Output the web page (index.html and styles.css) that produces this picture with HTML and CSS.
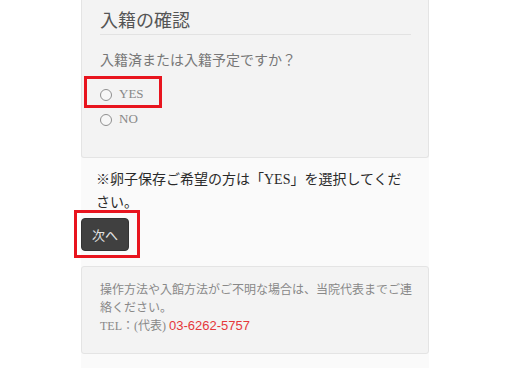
FILE: index.html
```html
<!DOCTYPE html>
<html lang="ja">
<head>
<meta charset="utf-8">
<title>入籍の確認</title>
<link rel="stylesheet" href="styles.css">
</head>
<body>
<div class="page">
  <section class="card card-top">
    <h2 class="card-title">入籍の確認</h2>
    <p class="question">入籍済または入籍予定ですか？</p>
    <label class="option option-marked"><input type="radio" name="married" class="radio"><span class="option-text">YES</span><span class="mark mark-yes"></span></label>
    <label class="option"><input type="radio" name="married" class="radio"><span class="option-text">NO</span></label>
  </section>
  <p class="note">※卵子保存ご希望の方は「YES」を選択してください。</p>
  <div class="actions">
    <button class="btn-next" type="button">次へ</button>
    <span class="mark mark-btn"></span>
  </div>
  <section class="card card-info">
    <p class="info"><span class="nowrap">操作方法や入館方法がご不明な場合は、当院代表までご連</span>絡ください。<br>TEL：(代表) <span class="tel">03-6262-5757</span></p>
  </section>
</div>
</body>
</html>
```

FILE: styles.css
```css
html, body {
  margin: 0;
  padding: 0;
  background: #ffffff;
}
body {
  font-family: "Liberation Serif", "Noto Sans CJK JP", serif;
}
.page {
  width: 348px;
  margin-left: 81px;
  min-height: 368px;
  background: #fafafa;
  display: flex;
  flex-direction: column;
}
.card {
  background: #f3f3f3;
  border: 1px solid #e4e4e4;
  border-radius: 3px;
  box-sizing: border-box;
}
.card-top {
  border-top: none;
  border-radius: 0 0 3px 3px;
  padding: 9px 17px 27px 18px;
  display: flex;
  flex-direction: column;
  align-items: flex-start;
  height: 158px;
}
.card-title {
  align-self: stretch;
  margin: 0;
  font-size: 18px;
  line-height: 24px;
  font-weight: normal;
  color: #555;
  padding-bottom: 1px;
  border-bottom: 1px solid #e2e2e2;
}
.question {
  margin: 16px 0 0;
  font-size: 14px;
  line-height: 20px;
  color: #777;
}
.option {
  position: relative;
  display: flex;
  align-items: center;
  height: 20px;
  margin-top: 5px;
  font-size: 13px;
  color: #888;
}
.option-marked {
  margin-top: 13px;
}
.radio {
  appearance: none;
  -webkit-appearance: none;
  width: 12px;
  height: 12px;
  margin: 1px 7px 0 0;
  border: 1px solid #8f8f8f;
  border-radius: 50%;
  background: #f7f7f7;
  box-sizing: border-box;
}
.option-text {
  line-height: 20px;
}
.mark {
  position: absolute;
  border: 3px solid #e8141e;
  box-sizing: border-box;
  pointer-events: none;
}
.mark-yes {
  left: -16px;
  top: -8px;
  width: 78px;
  height: 32px;
}
.note {
  margin: 10px 0 0;
  padding: 0 15px;
  font-size: 14px;
  line-height: 23px;
  color: #2a2a2a;
}
.actions {
  position: relative;
  margin-top: 4px;
  align-self: flex-start;
}
.btn-next {
  display: block;
  width: 48px;
  height: 33px;
  padding: 0;
  border: 1px solid #333;
  border-radius: 4px;
  background: #404040;
  color: #e4e4e4;
  font-family: "Noto Sans CJK JP", sans-serif;
  font-size: 13px;
  font-weight: normal;
}
.mark-btn {
  left: -7px;
  top: -8px;
  width: 66px;
  height: 48px;
}
.card-info {
  margin-top: 15px;
  padding: 15px 4px 17px 18px;
}
.info {
  margin: 0;
  font-size: 12px;
  line-height: 17.5px;
  color: #888;
}
.nowrap {
  white-space: nowrap;
}
.tel {
  color: #e5383b;
  font-family: "Liberation Sans", sans-serif;
  font-size: 13px;
}
```
